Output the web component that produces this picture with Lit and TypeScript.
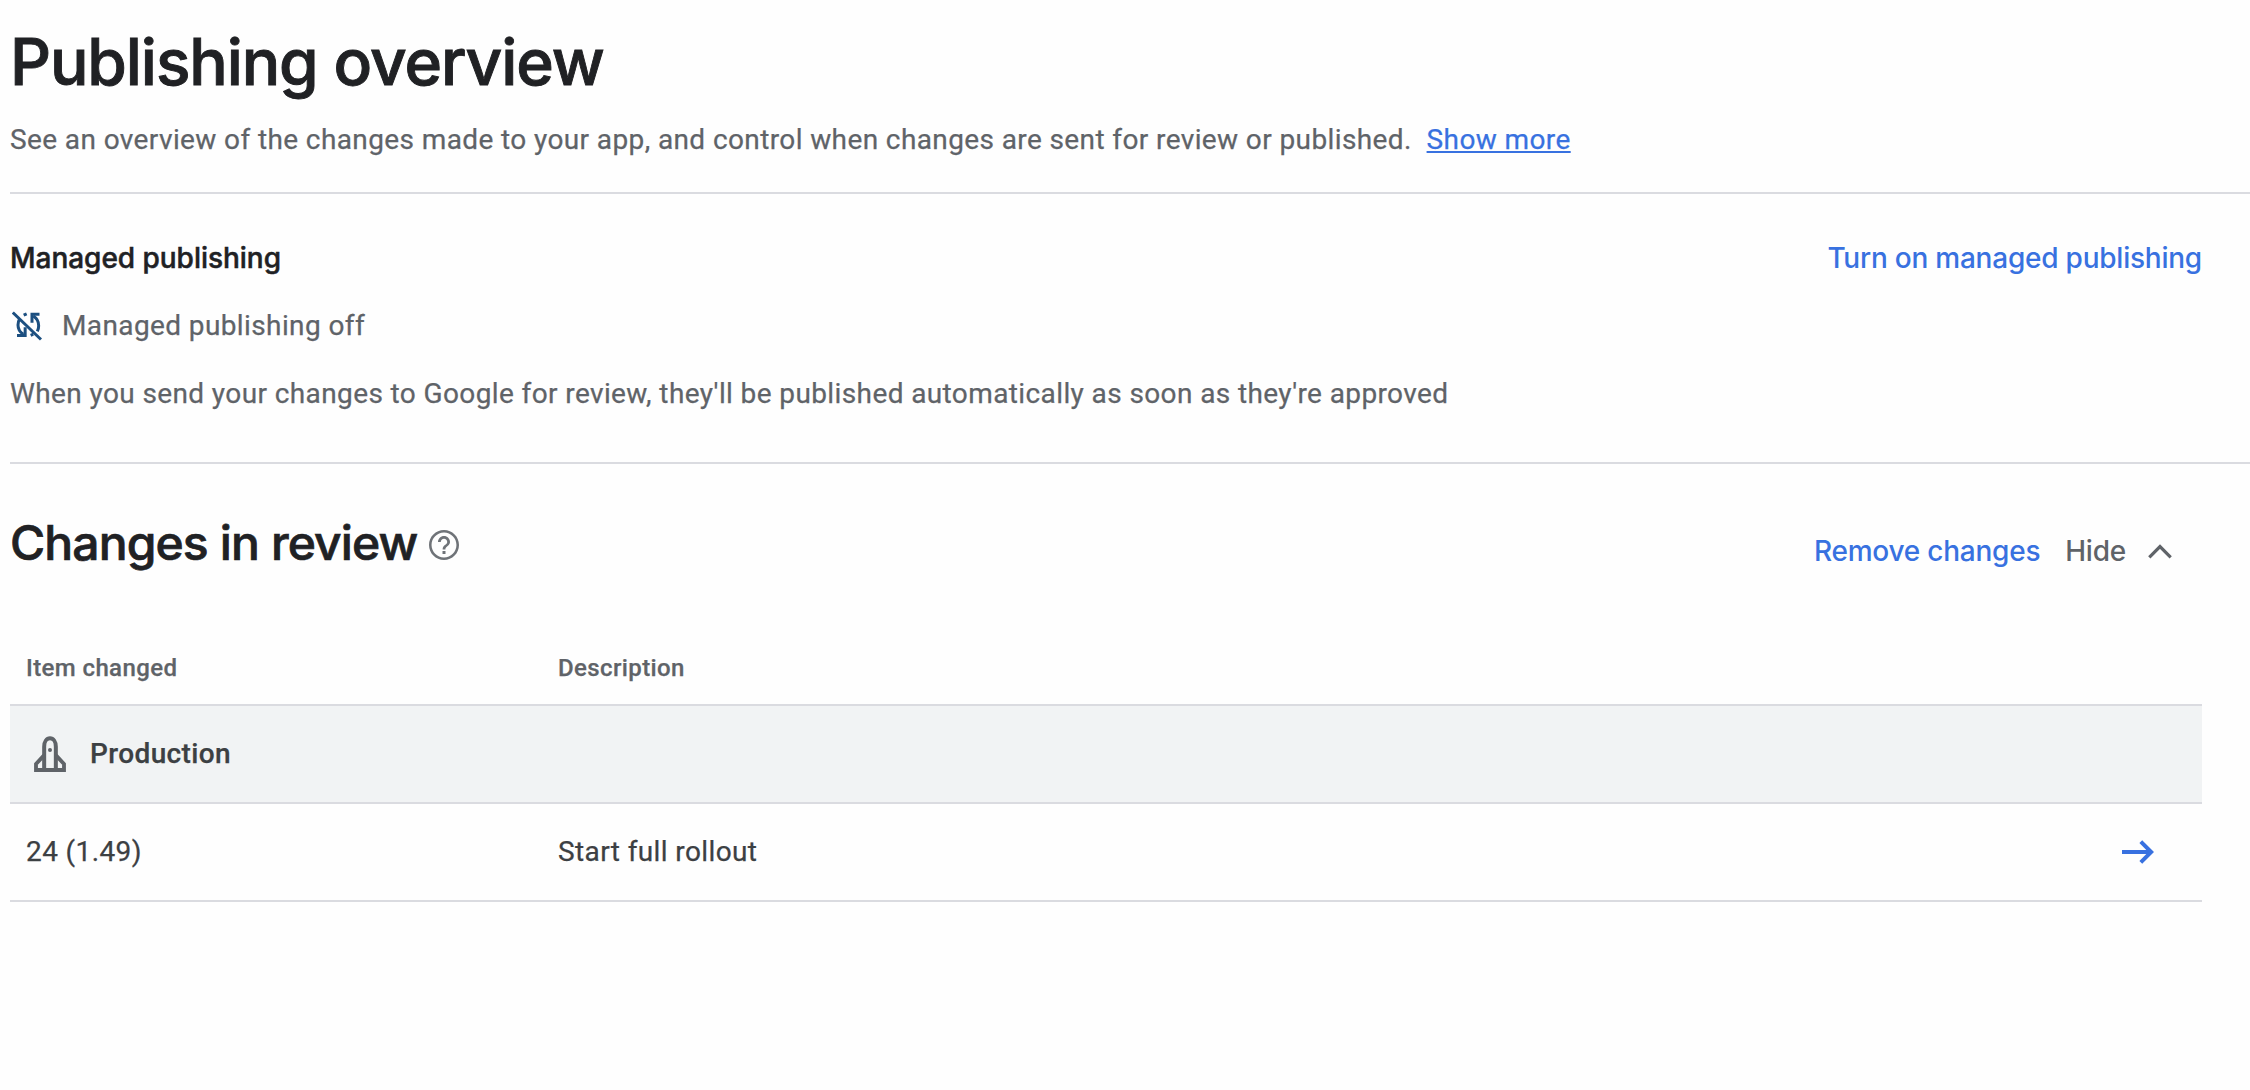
import { LitElement, html, svg, css } from "lit";
import { customElement, property } from "lit/decorators.js";

const syncOffIcon = svg`
  <svg class="icon-sync" viewBox="24 24 90 90" fill="none" stroke="currentColor" stroke-width="9">
    <path d="M26.500 28.500L111 109.500" stroke-width="9" />
    <path d="M106.500 34H84V59" />
    <path d="M88 39C99 46 104 56 104 68C104 75 102.500 80 100 85" />
    <path d="M39 97.500H63.500V73" />
    <path d="M58 94C47 87 42 78 42 66C42 59 44 52 47 47" />
    <path d="M59 36.500L68 32.500M80 97L88 93.500" />
  </svg>`;

const helpIcon = svg`
  <svg class="icon-help" viewBox="0 0 24 24" fill="currentColor">
    <path d="M11 18h2v-2h-2v2zm1-16C6.480 2 2 6.480 2 12s4.480 10 10 10 10-4.480 10-10S17.520 2 12 2zm0 18.300c-4.580 0-8.300-3.720-8.300-8.300S7.420 3.700 12 3.700s8.300 3.720 8.300 8.300-3.720 8.300-8.300 8.300zm0-14.300c-2.210 0-4 1.790-4 4h1.850c0-1.190.960-2.150 2.150-2.150s2.150.960 2.150 2.150c0 2-3.070 1.750-3.070 5h1.850c0-2.250 3.070-2.500 3.070-5 0-2.210-1.790-4-4-4z" />
  </svg>`;

const chevronIcon = svg`
  <svg class="icon-chevron" viewBox="0 0 24 15" fill="none" stroke="currentColor" stroke-width="3.200">
    <path d="M1.300 13.300L12 2.600L22.700 13.300" />
  </svg>`;

const rocketIcon = svg`
  <svg class="icon-rocket" viewBox="24 24 96 108" fill="none" stroke="currentColor" stroke-width="12">
    <path d="M54.500 126V56C54.500 41 62 31 72 31S89.500 41 89.500 56V126" />
    <path d="M54 82L30 108V126H114V108L90 82" stroke-width="11.500" />
    <circle cx="72" cy="66" r="6" fill="currentColor" stroke="none" />
  </svg>`;

const arrowIcon = svg`
  <svg class="icon-arrow" viewBox="0 0 32 24" fill="none" stroke="currentColor" stroke-width="4">
    <path d="M0 12H29" />
    <path d="M18.800 1.600L29.200 12L18.800 22.400" />
  </svg>`;

interface Change {
  item: string;
  description: string;
}

@customElement("changes-table")
export class ChangesTable extends LitElement {
  @property() track = "";
  @property({ attribute: false }) changes: Change[] = [];

  static styles = css`
    :host {
      display: block;
      color: #3c4043;
    }
    svg {
      display: block;
    }
    .row {
      display: grid;
      grid-template-columns: 532px 1fr auto;
      align-items: center;
      height: 96px;
      padding: 0 48px 0 16px;
      border-bottom: 2px solid #dadbe0;
    }
    .row.head {
      height: 32px;
      padding-bottom: 20px;
      font-size: 24px;
      line-height: 32px;
      font-weight: 500;
      color: #5f6368;
    }
    .track {
      display: flex;
      align-items: center;
      gap: 24px;
      height: 96px;
      padding-left: 24px;
      background: #f1f3f4;
      border-bottom: 2px solid #dadbe0;
      font-weight: 500;
    }
    .icon-rocket {
      width: 32px;
      height: 36px;
      color: #5f6368;
    }
    .icon-arrow {
      width: 32px;
      height: 24px;
      color: #3871e0;
    }
  `;

  render() {
    return html`
      <div class="row head"><span>Item changed</span><span>Description</span></div>
      <div class="track">${rocketIcon}<span>${this.track}</span></div>
      ${this.changes.map(
        (c) => html`<div class="row"><span>${c.item}</span><span>${c.description}</span>${arrowIcon}</div>`
      )}
    `;
  }
}

@customElement("app-root")
export class AppRoot extends LitElement {
  private changes: Change[] = [{ item: "24 (1.49)", description: "Start full rollout" }];

  static styles = css`
    :host {
      display: block;
      box-sizing: border-box;
      min-height: 1090px;
      padding: 26px 0 0 10px;
      background: #fefefe;
      color: #5f6368;
      font: 400 28px/40px Roboto, "Liberation Sans", sans-serif;
      letter-spacing: 0.39px;
      -webkit-text-stroke: 0.25px currentColor;
      overflow: hidden;
    }
    h1,
    h2,
    h3,
    p {
      margin: 0;
    }
    svg {
      display: block;
      flex: none;
    }
    h1,
    h2,
    h3,
    .action {
      font-family: Inter, Roboto, sans-serif;
      font-weight: 500;
    }
    h1,
    h2,
    h3 {
      color: #202124;
    }
    h1 {
      font-size: 64px;
      line-height: 72px;
      letter-spacing: -1.1px;
      -webkit-text-stroke-width: 0.9px;
    }
    h2 {
      font-size: 48px;
      line-height: 56px;
      letter-spacing: -0.88px;
      -webkit-text-stroke-width: 0.7px;
    }
    h3 {
      font-size: 28px;
      line-height: 40px;
      letter-spacing: -0.03px;
      -webkit-text-stroke-width: 0.5px;
    }
    .intro {
      padding: 22px 0 32px;
      border-bottom: 2px solid #dadbe0;
    }
    .more {
      margin-left: 7.500px;
      color: #3871e0;
      text-decoration: underline;
      text-decoration-thickness: 2px;
      text-underline-offset: 2px;
      text-decoration-skip-ink: none;
    }
    .action {
      color: #3871e0;
      letter-spacing: -0.23px;
      -webkit-text-stroke-width: 0;
    }
    .managed {
      display: flex;
      flex-direction: column;
      gap: 28px;
      padding: 44px 0 48px;
      border-bottom: 2px solid #dadbe0;
    }
    .bar {
      display: flex;
      justify-content: space-between;
      padding-right: 48px;
    }
    .status {
      display: flex;
      align-items: center;
      gap: 20px;
      padding-left: 2px;
    }
    .icon-sync {
      width: 30px;
      height: 30px;
      color: #1c4f80;
    }
    .review {
      padding: 51px 48px 0 0;
    }
    .review .bar {
      padding-right: 30px;
    }
    .title {
      display: flex;
      gap: 9px;
    }
    .icon-help {
      width: 36px;
      height: 36px;
      margin-top: 12px;
      color: #6f7378;
    }
    .actions {
      display: flex;
      align-items: center;
      height: 40px;
      margin-top: 16px;
    }
    .actions .hide {
      margin: 0 22px 0 25px;
      color: #5f6368;
    }
    .icon-chevron {
      width: 24px;
      height: 15px;
    }
    changes-table {
      margin-top: 81px;
    }
  `;

  render() {
    return html`
      <h1>Publishing overview</h1>
      <p class="intro">
        See an overview of the changes made to your app, and control when changes are sent for review or published.
        <a class="more">Show more</a>
      </p>
      <section class="managed">
        <div class="bar">
          <h3>Managed publishing</h3>
          <span class="action">Turn on managed publishing</span>
        </div>
        <div class="status">${syncOffIcon}<span>Managed publishing off</span></div>
        <p>When you send your changes to Google for review, they'll be published automatically as soon as they're approved</p>
      </section>
      <section class="review">
        <div class="bar">
          <div class="title"><h2>Changes in review</h2>${helpIcon}</div>
          <div class="actions">
            <span class="action">Remove changes</span>
            <span class="action hide">Hide</span>
            ${chevronIcon}
          </div>
        </div>
        <changes-table track="Production" .changes=${this.changes}></changes-table>
      </section>
    `;
  }
}
